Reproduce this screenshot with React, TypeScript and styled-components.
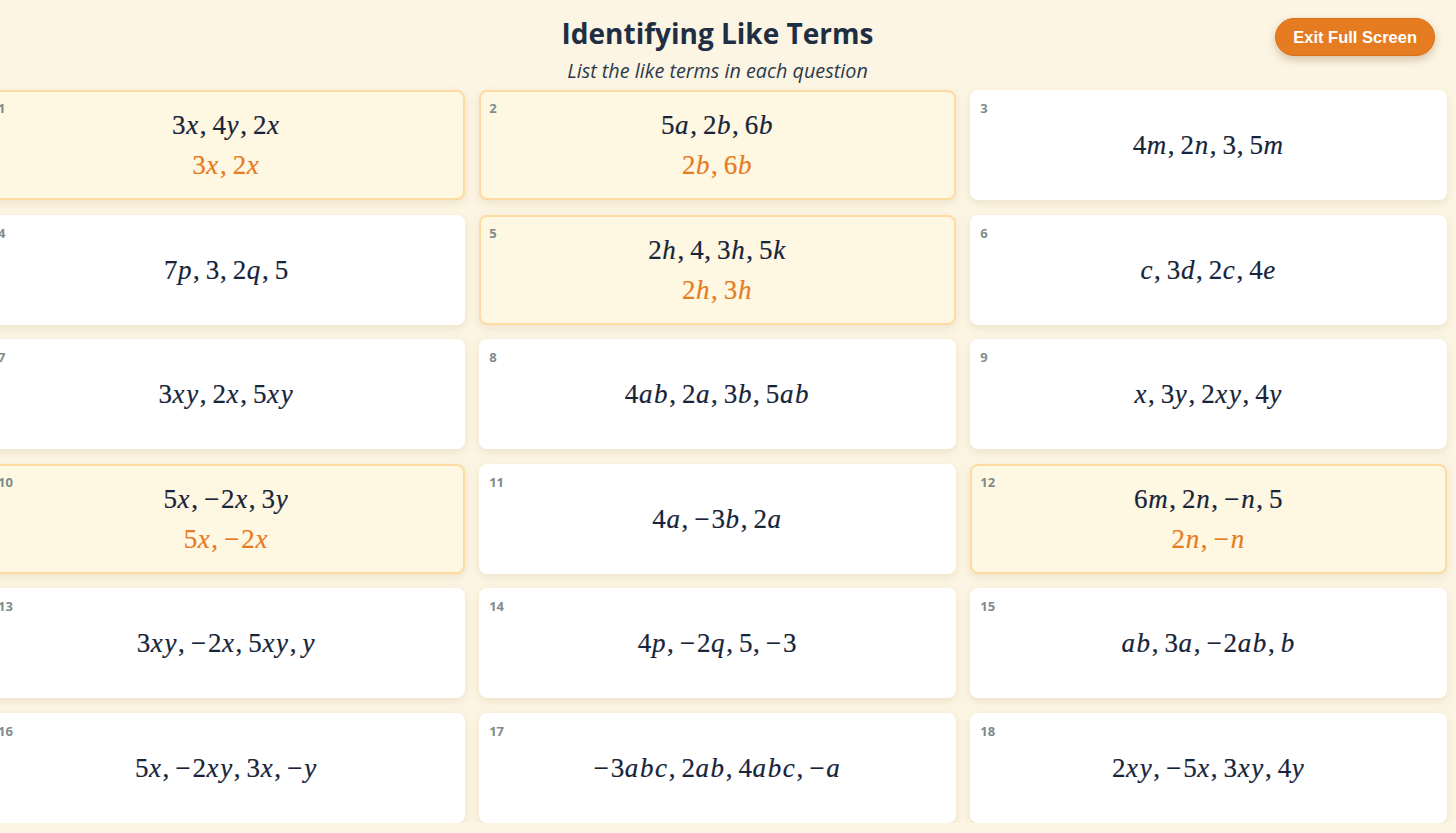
import React from 'react';
import styled, { createGlobalStyle } from 'styled-components';

const GlobalStyle = createGlobalStyle`
  html, body {
    margin: 0;
    padding: 0;
    background: #fcf5e3;
    overflow: hidden;
  }
  * {
    box-sizing: border-box;
  }
`;

const Page = styled.div`
  width: 1459px;
  margin-left: -12px;
  font-family: 'Open Sans', 'Noto Sans', sans-serif;
`;

const Header = styled.header`
  display: grid;
  grid-template-columns: 1fr auto 1fr;
  align-items: start;
  padding-top: 13px;
  height: 90px;
`;

const TitleBlock = styled.div`
  grid-column: 2;
  text-align: center;
`;

const Title = styled.h1`
  margin: 0;
  font-size: 28px;
  line-height: 40px;
  font-weight: 700;
  color: #1f2f43;
`;

const Subtitle = styled.p`
  margin: 6px 0 0;
  font-size: 19.8px;
  line-height: 24px;
  font-style: italic;
  color: #2c3a4b;
`;

const ExitButton = styled.button`
  grid-column: 3;
  justify-self: end;
  margin: 5px 12px 0 0;
  height: 38px;
  padding: 0 17px;
  border: 1px solid #d97117;
  border-radius: 19px;
  background: #e67c22;
  color: #fff;
  font-family: 'Liberation Sans', Arial, sans-serif;
  font-size: 16.5px;
  font-weight: 700;
  box-shadow: 0 4px 8px rgba(120, 70, 20, 0.28);
  cursor: pointer;
`;

const Grid = styled.main`
  display: grid;
  grid-template-columns: repeat(3, 1fr);
  grid-auto-rows: 110px;
  gap: 14.5px;
`;

const Card = styled.div<{ $highlight: boolean }>`
  position: relative;
  display: flex;
  flex-direction: column;
  align-items: center;
  justify-content: center;
  gap: 4px;
  border-radius: 8px;
  border: 2px solid ${(p) => (p.$highlight ? '#fddba2' : '#ffffff')};
  background: ${(p) => (p.$highlight ? '#fef7e1' : '#ffffff')};
  box-shadow: 0 3px 8px rgba(150, 120, 60, 0.14);
`;

const QNumber = styled.span`
  position: absolute;
  top: 7px;
  left: 8px;
  font-size: 13px;
  font-weight: 700;
  color: #7f8c8d;
`;

const MathLine = styled.div<{ $answer?: boolean }>`
  font-family: 'Liberation Serif', 'Times New Roman', serif;
  font-size: 27px;
  line-height: 36px;
  letter-spacing: 0.6px;
  color: ${(p) => (p.$answer ? '#e67c22' : '#17243a')};
  -webkit-text-stroke: 0.2px ${(p) => (p.$answer ? '#e67c22' : '#17243a')};
  white-space: nowrap;
`;

const Var = styled.i`
  font-style: italic;
  padding-right: 1px;
`;

const Punct = styled.span`
  margin-right: 0.2em;
`;

const Minus = styled.span`
  margin-right: 0.05em;
`;

function MathText({ text }: { text: string }) {
  const parts = text.replace(/\s/g, '').split('');
  return (
    <>
      {parts.map((ch, i) => {
        if (/[a-z]/.test(ch)) return <Var key={i}>{ch}</Var>;
        if (ch === ',') return <Punct key={i}>,</Punct>;
        if (ch === '-') return <Minus key={i}>−</Minus>;
        return <span key={i}>{ch}</span>;
      })}
    </>
  );
}

type Question = { q: string; a?: string };

const questions: Question[] = [
  { q: '3x, 4y, 2x', a: '3x, 2x' },
  { q: '5a, 2b, 6b', a: '2b, 6b' },
  { q: '4m, 2n, 3, 5m' },
  { q: '7p, 3, 2q, 5' },
  { q: '2h, 4, 3h, 5k', a: '2h, 3h' },
  { q: 'c, 3d, 2c, 4e' },
  { q: '3xy, 2x, 5xy' },
  { q: '4ab, 2a, 3b, 5ab' },
  { q: 'x, 3y, 2xy, 4y' },
  { q: '5x, -2x, 3y', a: '5x, -2x' },
  { q: '4a, -3b, 2a' },
  { q: '6m, 2n, -n, 5', a: '2n, -n' },
  { q: '3xy, -2x, 5xy, y' },
  { q: '4p, -2q, 5, -3' },
  { q: 'ab, 3a, -2ab, b' },
  { q: '5x, -2xy, 3x, -y' },
  { q: '-3abc, 2ab, 4abc, -a' },
  { q: '2xy, -5x, 3xy, 4y' },
];

export default function App() {
  return (
    <>
      <GlobalStyle />
      <Page>
        <Header>
          <TitleBlock>
            <Title>Identifying Like Terms</Title>
            <Subtitle>List the like terms in each question</Subtitle>
          </TitleBlock>
          <ExitButton>Exit Full Screen</ExitButton>
        </Header>
        <Grid>
          {questions.map((item, i) => (
            <Card key={i} $highlight={!!item.a}>
              <QNumber>{i + 1}</QNumber>
              <MathLine>
                <MathText text={item.q} />
              </MathLine>
              {item.a && (
                <MathLine $answer>
                  <MathText text={item.a} />
                </MathLine>
              )}
            </Card>
          ))}
        </Grid>
      </Page>
    </>
  );
}
